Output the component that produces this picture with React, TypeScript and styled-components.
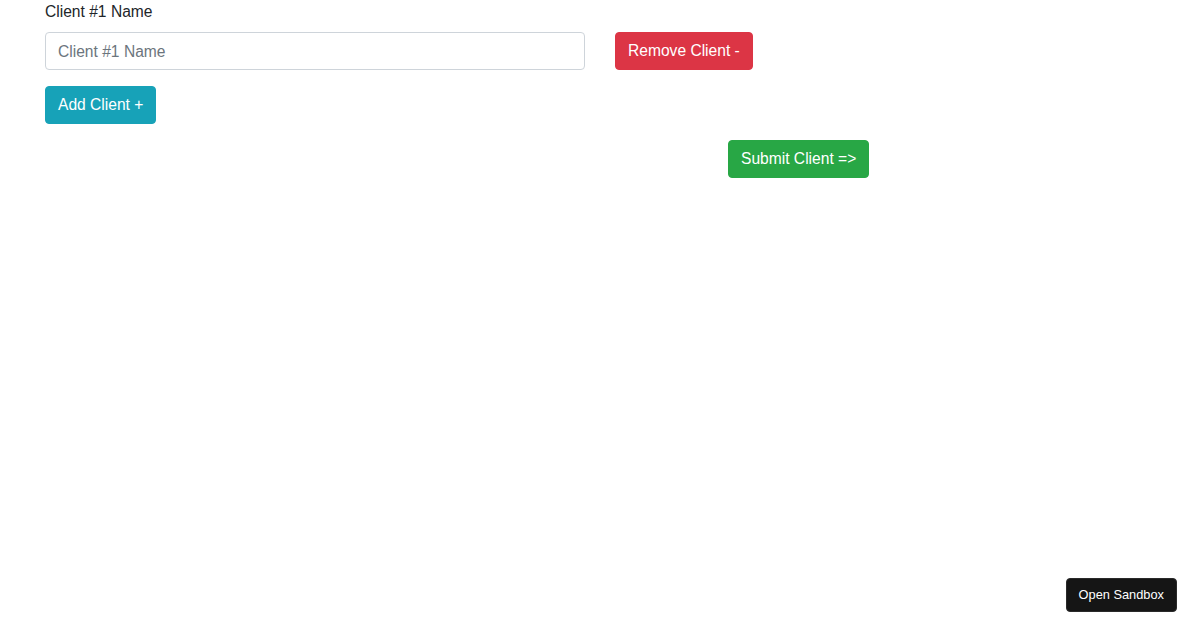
import React from "react";
import styled, { createGlobalStyle } from "styled-components";

const GlobalStyle = createGlobalStyle`
  html, body {
    margin: 0;
    padding: 0;
    background: #fff;
  }
  body {
    font-family: "Liberation Sans", Arial, sans-serif;
    font-size: 15.6px;
    line-height: 1.5;
    color: #212529;
  }
  * {
    box-sizing: border-box;
  }
`;

const Page = styled.div`
  padding: 0 45px;
  display: flex;
  flex-direction: column;
  align-items: flex-start;
`;

const Label = styled.label`
  display: block;
  margin-bottom: 8px;
  font-size: 15.6px;
  line-height: 24px;
`;

const FieldRow = styled.div`
  display: flex;
  align-items: center;
  gap: 30px;
`;

const Input = styled.input`
  width: 540px;
  height: 38px;
  padding: 7px 12px 5px;
  font-family: inherit;
  font-size: 15.6px;
  line-height: 24px;
  color: #495057;
  border: 1px solid #ced4da;
  border-radius: 4px;
  outline: none;
  &::placeholder {
    color: #6c757d;
  }
`;

const Button = styled.button<{ $tone: string; $offset?: number }>`
  height: 38px;
  padding: 6px 12px;
  margin-left: ${(p) => p.$offset ?? 0}px;
  font-family: inherit;
  font-size: 15.6px;
  line-height: 24px;
  color: #fff;
  background: ${(p) => p.$tone};
  border: 1px solid ${(p) => p.$tone};
  border-radius: 4px;
  cursor: pointer;
`;

const Spaced = styled.div`
  margin-top: 16px;
`;

const SandboxButton = styled.button`
  position: fixed;
  right: 23px;
  bottom: 18px;
  height: 34px;
  padding: 0 12px 1px;
  font-family: "Liberation Sans", Arial, sans-serif;
  font-size: 12.8px;
  color: #fff;
  background: #151515;
  border: 1px solid #2a2a2a;
  border-radius: 4px;
`;

export default function App() {
  return (
    <>
      <GlobalStyle />
      <Page>
        <Label htmlFor="client-1">Client #1 Name</Label>
        <FieldRow>
          <Input id="client-1" placeholder="Client #1 Name" />
          <Button $tone="#dc3545">Remove Client -</Button>
        </FieldRow>
        <Spaced>
          <Button $tone="#17a2b8">Add Client +</Button>
        </Spaced>
        <Spaced>
          <Button $tone="#28a745" $offset={683}>
            Submit Client =&gt;
          </Button>
        </Spaced>
      </Page>
      <SandboxButton>Open Sandbox</SandboxButton>
    </>
  );
}
